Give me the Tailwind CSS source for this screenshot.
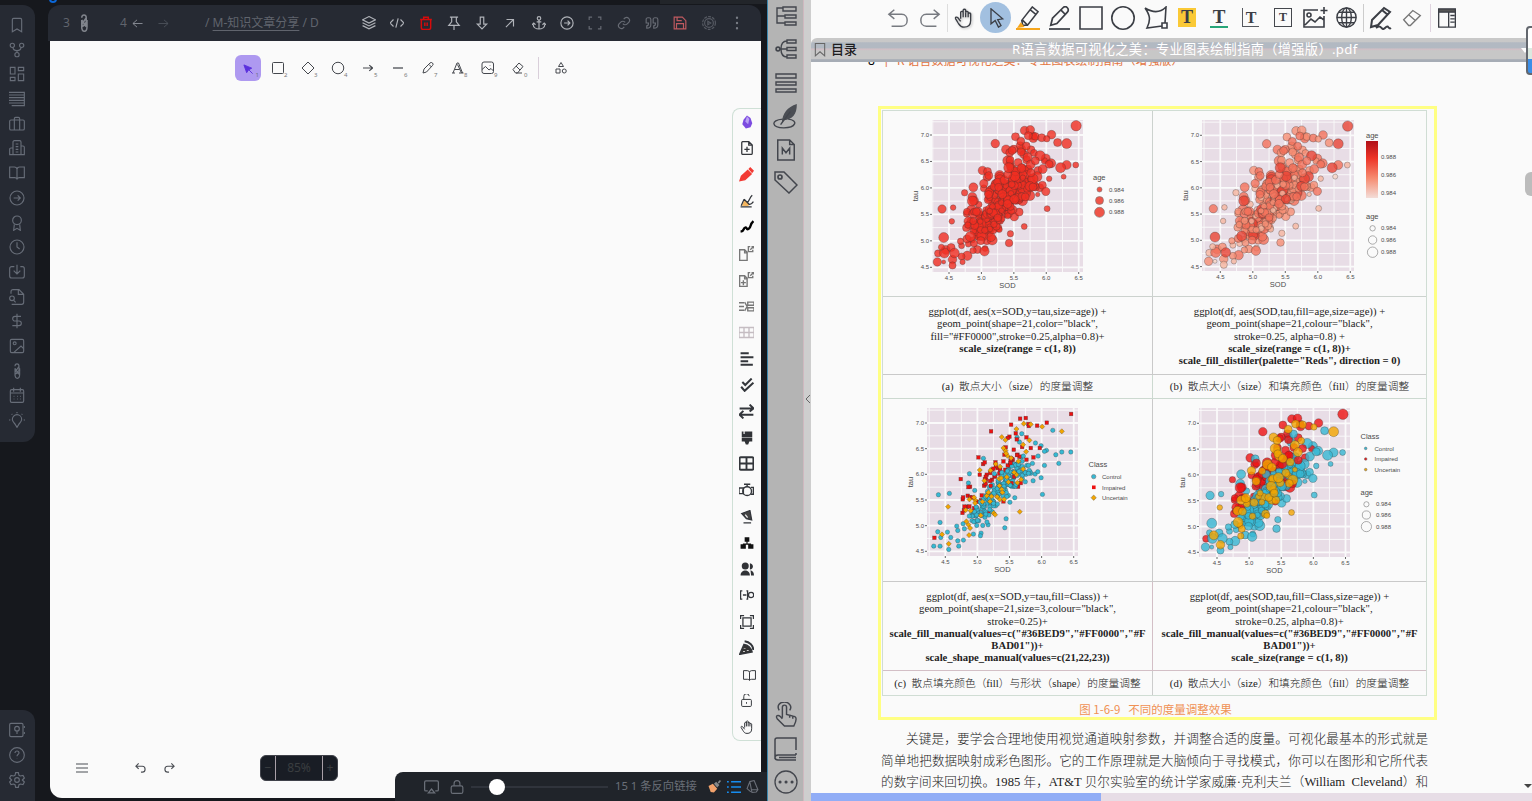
<!DOCTYPE html>
<html lang="zh">
<head>
<meta charset="utf-8">
<title>Notes and PDF reader</title>
<script src="https://cdn.jsdelivr.net/npm/@tailwindcss/browser@4"></script>
</head>
<body class="w-[1532px] h-[801px] overflow-hidden bg-[#16181d] font-['Noto_Sans','Noto_Sans_CJK_SC',sans-serif]">
<svg width="0" height="0" class="absolute" stroke-linecap="round" stroke-linejoin="round">
<defs>
<symbol id="bookmark" viewBox="0 0 24 24"><path d="m19 22-7-4-7 4V4a2 2 0 0 1 2-2h10a2 2 0 0 1 2 2z"/></symbol>
<symbol id="fork" viewBox="0 0 24 24"><circle cx="12" cy="19" r="3.2"/><circle cx="5" cy="5" r="3.2"/><circle cx="19" cy="5" r="3.2"/><path d="M6 8c0 4 2 5 6 5s6-1 6-5M12 13v3"/></symbol>
<symbol id="dash" viewBox="0 0 24 24"><path d="M2 2h7v10H2zM14 2h8v5h-8zM14 12h8v10h-8zM2 17h7v5H2z"/></symbol>
<symbol id="rows" viewBox="0 0 24 24"><path d="M0 2h23v20H4M0 6h23M0 10h23M0 14h23M0 18h23"/></symbol>
<symbol id="case" viewBox="0 0 24 24"><rect x="1" y="6" width="22" height="15" rx="2"/><path d="M8 21V4a2 2 0 0 1 2-2h4a2 2 0 0 1 2 2v17"/></symbol>
<symbol id="news" viewBox="0 0 24 24"><path d="M6 22V3a2 2 0 0 1 2-2h8a2 2 0 0 1 2 2v19zM6 12H3a2 2 0 0 0-2 2v8h22V11a2 2 0 0 0-2-2h-3M10 6h4M10 10h4M10 14h4M10 18h4"/></symbol>
<symbol id="book" viewBox="0 0 24 24"><path d="M12 6v15M1 3h7a4 4 0 0 1 4 3 4 4 0 0 1 4-3h7v16h-7a4 4 0 0 0-4 2 4 4 0 0 0-4-2H1z"/></symbol>
<symbol id="circler" viewBox="0 0 24 24"><circle cx="12" cy="12" r="10.5"/><path d="M7 12h10M13 8l4 4-4 4"/></symbol>
<symbol id="award" viewBox="0 0 24 24"><circle cx="12" cy="8" r="6.5"/><path d="M8 14 7 23l5-3 5 3-1-9"/></symbol>
<symbol id="clock" viewBox="0 0 24 24"><circle cx="12" cy="12" r="10.5"/><path d="M12 5v7l4 3"/></symbol>
<symbol id="inbox" viewBox="0 0 24 24"><path d="M12 1v13M7 10l5 5 5-5M8 4H4a3 3 0 0 0-3 3v11a3 3 0 0 0 3 3h16a3 3 0 0 0 3-3V7a3 3 0 0 0-3-3h-3"/></symbol>
<symbol id="filesearch" viewBox="0 0 24 24"><path d="M3 7V4a3 3 0 0 1 3-3h9l7 7v12a3 3 0 0 1-3 3H4M14 1v7h8"/><circle cx="4.500" cy="14" r="3.500"/><path d="m7 17 3 3"/></symbol>
<symbol id="dollar" viewBox="0 0 24 24"><path d="M12 1v22M18 5H9a3.500 3.500 0 0 0 0 7h6a3.500 3.500 0 0 1 0 7H5"/></symbol>
<symbol id="image" viewBox="0 0 24 24"><rect x="2" y="2" width="20" height="20" rx="2"/><circle cx="8.500" cy="8" r="2.200"/><path d="M7 22 18 12l4 4"/></symbol>
<symbol id="clip" viewBox="0 0 24 24"><path d="M9 5c0-5 6-5 6 0L9 14M15 5v6l-6 6V8M9 17c0 8 7 8 7 0v-4l-7 4M16 13V8M9 8l6 9"/></symbol>
<symbol id="cal" viewBox="0 0 24 24"><rect x="2" y="4" width="20" height="19" rx="2"/><path d="M7 1v6M17 1v6M2 9h20M7 14h1M12 14h1M17 14h1M7 18h1M12 18h1M17 18h1"/></symbol>
<symbol id="bulb" viewBox="0 0 24 24"><path d="M9.500 19c0-2-4.500-3-4.500-8a7 7 0 0 1 14 0c0 5-4.500 6-4.500 8L12 23zM12 0v2M2 12H0M24 12h-2M5 4 4 3M19 4l1-1"/></symbol>
<symbol id="vault" viewBox="0 0 24 24"><rect x="1" y="2" width="20" height="20" rx="2"/><circle cx="12" cy="10" r="3.500"/><path d="M12 13v5M23 6v3M23 15v3"/></symbol>
<symbol id="help" viewBox="0 0 24 24"><circle cx="12" cy="12" r="11"/><path d="M9 9a3 3 0 0 1 6 0c0 2-3 2-3 5M12 17.500v.5"/></symbol>
<symbol id="gear" viewBox="0 0 24 24"><circle cx="12" cy="12" r="3.500"/><path d="m10 1h4l1 4 2 1 4-1 2 4-3 3 3 3-2 4-4-1-2 1-1 4h-4l-1-4-2-1-4 1-2-4 3-3-3-3 2-4 4 1 2-1z"/></symbol>
<symbol id="left" viewBox="0 0 24 24"><path d="M23 12H2M11 4l-9 8 9 8"/></symbol>
<symbol id="right" viewBox="0 0 24 24"><path d="M1 12h21M13 4l9 8-9 8"/></symbol>
<symbol id="layers" viewBox="0 0 24 24"><path d="m12 1 11 5.500-11 5.500L1 6.500zM1 11.500 12 17l11-5.500M1 16.500 12 22l11-5.500"/></symbol>
<symbol id="code" viewBox="0 0 24 24"><path d="m6 6-6 6 6 6M18 6l6 6-6 6M14 4l-4 16"/></symbol>
<symbol id="trash" viewBox="0 0 24 24"><path d="M2 6h20M4 6v14a3 3 0 0 0 3 3h10a3 3 0 0 0 3-3V6M8 5V2h8v3M10 11v6M14 11v6"/></symbol>
<symbol id="pin" viewBox="0 0 24 24"><path d="M5 2h14M8 2v8l-5 6h18l-5-6V2M12 16v8"/></symbol>
<symbol id="down" viewBox="0 0 24 24"><path d="M9 2h6v12h5l-8 8-8-8h5z"/></symbol>
<symbol id="upright" viewBox="0 0 24 24"><path d="M5 19 18 6M6 6h12v12"/></symbol>
<symbol id="anchor" viewBox="0 0 24 24"><circle cx="12" cy="4" r="3"/><path d="M12 7v16M2 14c0 11 20 11 20 0M0 15l3-3 3 3M18 15l3-3 3 3M8 10h8"/></symbol>
<symbol id="expand" viewBox="0 0 24 24"><path d="M7 2H2v5M17 2h5v5M7 22H2v-5M17 22h5v-5"/></symbol>
<symbol id="link" viewBox="0 0 24 24"><path d="m10 13a5 5 0 0 0 7.500.5l3-3a5 5 0 0 0-7-7l-2 2M14 11a5 5 0 0 0-7.500-.5l-3 3a5 5 0 0 0 7 7l2-2"/></symbol>
<symbol id="quote" viewBox="0 0 24 24"><path d="M2 5a3 3 0 0 1 3-2h2a3 3 0 0 1 3 3v9c0 5-3 6-7 6v-4c3 0 3-2 3-5H2zM14 5a3 3 0 0 1 3-2h2a3 3 0 0 1 3 3v9c0 5-3 6-7 6v-4c3 0 3-2 3-5h-4z"/></symbol>
<symbol id="save" viewBox="0 0 24 24"><path d="M2 2h14l6 6v14H2zM6 22v-9h12v9M7 2v6h8"/></symbol>
<symbol id="badge" viewBox="0 0 24 24"><circle cx="12" cy="12" r="11" stroke-dasharray="5 2"/><circle cx="12" cy="12" r="7.500"/><path d="m10 9 5 3-5 3z" /></symbol>
<symbol id="pencil" viewBox="0 0 24 24"><path d="M2 22l2-8L16 2a3 3 0 0 1 5 5L9 20zM14 5l5 5"/></symbol>
<symbol id="eraser" viewBox="0 0 24 24"><path d="m2 15 12-13 8 7-11 13H7zM8 8l8 8M8 22h12"/></symbol>
<symbol id="hand" viewBox="0 0 24 24"><path d="M8 13V5a1.600 1.600 0 0 1 3 0V2.500a1.600 1.600 0 0 1 3 0V5a1.600 1.600 0 0 1 3 0v2a1.600 1.600 0 0 1 3 0v8c0 6-3 8-8 8-4 0-5-2-7-5l-3-5c-1-2 1-3 3-1l3 4M11 4v7M14 4v7M17 6v5"/></symbol>
<symbol id="filep" viewBox="0 0 24 24"><path d="M3 3a2 2 0 0 1 2-2h10l6 6v14a2 2 0 0 1-2 2H5a2 2 0 0 1-2-2zM15 1v6h6M12 10v9M7.500 14.500h9"/></symbol>
<symbol id="fileopen" viewBox="0 0 24 24"><path d="M1 6h8l4 4v13H1zM9 6v5h4M18 1h-3v8h7V6M18 6l5-5M20 1h3v3"/></symbol>
<symbol id="undo" viewBox="0 0 24 24"><path d="M8 3 2 8l6 5M2 8h14c8 0 8 13 0 13H5"/></symbol>
<symbol id="frame" viewBox="0 0 24 24"><path d="M5 5h14v14H5zM1 7V1h6M17 1h6v6M1 17v6h6M17 23h6v-6"/></symbol>
<symbol id="lock" viewBox="0 0 24 24"><rect x="2" y="10" width="20" height="13" rx="3"/><path d="M7 10V6a5 5 0 0 1 10 0v4"/></symbol>
<symbol id="unlock" viewBox="0 0 24 24"><rect x="3" y="10" width="18" height="13" rx="2"/><path d="M7 10V5a5 5 0 0 1 10-1M12 15v3"/></symbol>
</defs>
</svg>

<div class="flex w-[1532px] h-[801px]">
<!-- vault ribbon -->
<nav class="w-12 h-full flex flex-col justify-between pt-[5px] text-[#676d78] fill-none stroke-current stroke-[1.7]">
  <div class="w-[35px] h-[437px] rounded-r-xl bg-[#262a33] flex flex-col justify-between items-center pt-3 pb-[14px] pr-[2px]">
    <svg class="size-4"><use href="#bookmark"/></svg><svg class="size-4"><use href="#fork"/></svg><svg class="size-4"><use href="#dash"/></svg><svg class="size-4"><use href="#rows"/></svg><svg class="size-4"><use href="#case"/></svg><svg class="size-4"><use href="#news"/></svg><svg class="size-4"><use href="#book"/></svg><svg class="size-4"><use href="#circler"/></svg><svg class="size-4"><use href="#award"/></svg><svg class="size-4"><use href="#clock"/></svg><svg class="size-4"><use href="#inbox"/></svg><svg class="size-4"><use href="#filesearch"/></svg><svg class="size-4"><use href="#dollar"/></svg><svg class="size-4"><use href="#image"/></svg><svg class="size-4"><use href="#clip"/></svg><svg class="size-4"><use href="#cal"/></svg><svg class="size-4"><use href="#bulb"/></svg>
  </div>
  <div class="w-[35px] h-[91px] rounded-tr-xl bg-[#262a33] flex flex-col items-center gap-[9px] pt-3 pr-[2px]">
    <svg class="size-4"><use href="#vault"/></svg><svg class="size-4"><use href="#help"/></svg><svg class="size-4"><use href="#gear"/></svg>
  </div>
</nav>

<!-- drawing workspace -->
<main class="relative w-[719px] h-full pt-[5px]">
  <div class="absolute left-[612px] top-0 w-[107px] h-1 bg-[#22252a]"></div>
  <div class="absolute left-0 top-0 h-1 w-[10px] overflow-hidden"><div class="mt-[-5px] ml-px size-2 rounded-full border-2 border-[#0b67d8]"></div></div>
  <header class="w-[713px] h-9 rounded-t-xl bg-[#262a33] flex items-center text-[#60646d] fill-none stroke-current stroke-2 text-[12px]">
    <span class="ml-[15px] w-[13px]">3</span><svg class="ml-[-1px] size-[18px] text-[#80848c]"><use href="#clip"/></svg>
    <span class="ml-[27px] w-[9px]">4</span><svg class="ml-[3px] size-[11px] text-[#8c9099]"><use href="#left"/></svg><svg class="ml-[15px] size-[11px] text-[#4c515a]"><use href="#right"/></svg>
    <div class="ml-[36px] w-[117px] flex whitespace-pre overflow-hidden text-[12px]">/ <span class="underline underline-offset-[3px]">M-知识文章分享</span> / D</div>
    <div class="ml-[40px] flex gap-[14.300px] text-[#b0b3b9]">
      <svg class="size-[14px]"><use href="#layers"/></svg><svg class="size-[14px]"><use href="#code"/></svg><svg class="size-[14px] text-[#d60b0b] stroke-[2.5]"><use href="#trash"/></svg><svg class="size-[14px]"><use href="#pin"/></svg><svg class="size-[14px]"><use href="#down"/></svg><svg class="size-[14px]"><use href="#upright"/></svg><svg class="size-[14px]"><use href="#anchor"/></svg><svg class="size-[14px]"><use href="#circler"/></svg><svg class="size-[14px] text-[#676b74]"><use href="#expand"/></svg><svg class="size-[14px] text-[#676b74]"><use href="#link"/></svg><svg class="size-[14px] text-[#676b74]"><use href="#quote"/></svg><svg class="size-[14px] text-[#c05a60]"><use href="#save"/></svg><svg class="size-[14px] text-[#565a63]"><use href="#badge"/></svg><svg class="size-[14px] text-[#777b84]" viewBox="0 0 24 24"><path d="M12 3v.1M12 12v.1M12 21v.1" stroke-width="4" stroke-linecap="round"/></svg>
    </div>
  </header>
  <section class="relative ml-[2px] w-[711px] h-[756.500px] rounded-bl-xl bg-[#fafafa] flex flex-col">
    <div class="flex items-center mt-[14px] ml-[185px] h-[26px] text-[#44474d] fill-none stroke-current stroke-2 text-[6px]">
      <div class="w-[26px] h-[26px] rounded-md bg-[#ae99f0] relative flex items-center justify-center text-[#5b30dd]"><svg class="size-[11px] mt-[3px] ml-px" viewBox="0 0 24 24"><path d="m2 2 6 17 4-6 7-4z" fill="#5b30dd"/><path d="m12 12 9 9"/></svg><span class="absolute right-[2px] bottom-[1px] text-gray-500">1</span></div>
      <div class="flex ml-[2px]">
        <div class="w-[30px] h-6 relative flex items-center justify-center"><svg class="size-3 overflow-visible" viewBox="0 0 24 24"><rect x="1" y="1" width="22" height="22" rx="2"/></svg><span class="absolute left-[21px] bottom-0 text-[#777]">2</span></div>
        <div class="w-[30px] h-6 relative flex items-center justify-center"><svg class="size-3 overflow-visible" viewBox="0 0 24 24"><path d="m12 0 12 12-12 12L0 12z"/></svg><span class="absolute left-[21px] bottom-0 text-[#777]">3</span></div>
        <div class="w-[30px] h-6 relative flex items-center justify-center"><svg class="size-3 overflow-visible" viewBox="0 0 24 24"><circle cx="12" cy="12" r="11.500"/></svg><span class="absolute left-[21px] bottom-0 text-[#777]">4</span></div>
        <div class="w-[30px] h-6 relative flex items-center justify-center"><svg class="size-[10px]" viewBox="0 0 24 24"><path d="M0 12h23M15 5l8 7-8 7" stroke-width="2.800"/></svg><span class="absolute left-[21px] bottom-0 text-[#777]">5</span></div>
        <div class="w-[30px] h-6 relative flex items-center justify-center"><svg class="size-[10px]" viewBox="0 0 24 24"><path d="M0 12h24" stroke-width="3"/></svg><span class="absolute left-[21px] bottom-0 text-[#777]">6</span></div>
        <div class="w-[30px] h-6 relative flex items-center justify-center"><svg class="size-3"><use href="#pencil"/></svg><span class="absolute left-[21px] bottom-0 text-[#777]">7</span></div>
        <div class="w-[30px] h-6 relative flex items-center justify-center"><svg class="size-3 overflow-visible" viewBox="0 0 24 24"><path d="M2 22 10 2h3l8 20M6 15h9M0 22h6M14 22h9M11 5l8 17"/></svg><span class="absolute left-[21px] bottom-0 text-[#777]">8</span></div>
        <div class="w-[30px] h-6 relative flex items-center justify-center"><svg class="size-3 overflow-visible" viewBox="0 0 24 24"><rect x="0" y="0" width="23" height="23" rx="4"/><path d="m0 15 7-6 7 7 4-3 5 5M16 6v1"/></svg><span class="absolute left-[21px] bottom-0 text-[#777]">9</span></div>
        <div class="w-[30px] h-6 relative flex items-center justify-center"><svg class="size-3"><use href="#eraser"/></svg><span class="absolute left-[21px] bottom-0 text-[#777]">0</span></div>
      </div>
      <div class="w-px h-[22px] bg-[#d9cfda] ml-[5px]"></div>
      <svg class="size-3 ml-[16px]" viewBox="0 0 24 24"><path d="m12 1 5 8H7zM2 14h8v8H2z"/><circle cx="18.500" cy="18" r="4"/></svg>
    </div>
    <aside class="absolute right-0 top-[67px] w-[29px] h-[633px] border border-r-0 border-[#cfe0d6] rounded-l-lg text-[#33363b] fill-none stroke-current stroke-[2.2] grid auto-rows-fr items-center justify-items-center pr-px">
      <svg class="size-[14px]" viewBox="0 0 24 24" stroke="none"><path fill="#7c4be0" d="M12 1 6 8l-2 8 6 7 8-2 3-7-3-9z"/><path fill="#b9a1f3" d="m12 2-3 9 5 5 2-9z"/></svg>
      <svg class="size-[14px]"><use href="#filep"/></svg>
      <svg class="size-[15px]" viewBox="0 0 24 24" stroke="none" fill="#f23b34"><path d="M0 23 3 14 14 4l7 7L10 21zM15 3l3-3 6 6-3 4z"/></svg>
      <svg class="size-[14px]" viewBox="0 0 24 24"><path fill="#f3b55e" stroke="none" d="M3 20 8 10l8 8-2 3z"/><path d="M1 22h19M7 9l9 9M2 20 7 9M12 15c4-2 4-9 9-13M16 18c3 0 5-2 7-5"/></svg>
      <svg class="size-[14px]" viewBox="0 0 24 24"><path d="M1 20c7-1 4-6 8-7s1 5 6 2 1-7 8-13" stroke="#000" stroke-width="4"/></svg>
      <svg class="size-[15px] text-[#777]"><use href="#fileopen"/></svg>
      <svg class="size-[15px] text-[#777]" viewBox="0 0 24 24"><use href="#fileopen"/><path d="M7 13v8M3 17h8"/></svg>
      <svg class="size-[15px] text-[#777]" viewBox="0 0 24 24"><path d="M0 6h8M0 12h8M0 18h8M9 5l4 7-4 7M14 5h10v5H14zM14 14h10v5H14z"/></svg>
      <svg class="size-[15px] text-[#c5bdc2]" viewBox="0 0 24 24"><path d="M0 4h24v16H0zM0 12h24M8 4v16M16 4v16"/></svg>
      <svg class="size-[14px]" viewBox="0 0 24 24"><path d="M1 2h14M1 9h22M1 16h13M1 22h21" stroke-width="3.500"/></svg>
      <svg class="size-[14px]" viewBox="0 0 24 24"><path d="m4 7 5 5L20 1M2 15l6 7 15-14" stroke-width="3.500"/></svg>
      <svg class="size-[15px]" viewBox="0 0 24 24"><path d="M1 7h22M17 1l6 6-6 5M23 17H1M7 11l-6 6 6 6" stroke-width="3.200"/></svg>
      <svg class="size-[14px]" viewBox="0 0 24 24" stroke="none" fill="#303236"><path d="M3 1h3v4h2V1h13v10H3zM3 12h18v6h-5l-2 5h-4l-2-5H3z"/></svg>
      <svg class="size-[15px]" viewBox="0 0 24 24"><rect x="1" y="2" width="22" height="20" rx="2" stroke-width="3"/><path d="M1 12h22M12 2v20" stroke-width="3"/></svg>
      <svg class="size-[15px]" viewBox="0 0 24 24"><circle cx="13" cy="13" r="7"/><path d="M0 8h7v9H0zM19 7h4v11h-4M8 2h10M13 2v4"/></svg>
      <svg class="size-[14px]" viewBox="0 0 24 24"><path d="M3 6 17 1l3 16-9-2zM6 22h13" fill="#444"/><path d="m9 8 4 5" stroke="#eee"/></svg>
      <svg class="size-[14px]" viewBox="0 0 24 24" stroke="none" fill="#111"><path d="M8 2h8v8H8zM1 14h9v8H1zM14 14h9v8h-9zM11 10h2v3h6v2H5v-2h6z"/></svg>
      <svg class="size-[14px]" viewBox="0 0 24 24" stroke="none" fill="#303236"><circle cx="9" cy="7" r="6"/><path d="M1 23c0-11 16-11 16 0zM17 2c7 1 7 10 0 11zM18 14c4 1 6 4 6 9h-5z"/></svg>
      <svg class="size-[14px]" viewBox="0 0 24 24"><path d="M4 5H1v14h3M5 12h6M11 5h2v14h-2"/><circle cx="19" cy="12" r="4.500"/></svg>
      <svg class="size-[14px]"><use href="#frame"/></svg>
      <svg class="size-[15px]" viewBox="0 0 24 24"><path d="M1 23 8 7c7 1 11 5 13 12z" fill="#333"/><path d="M9 2c8 1 14 7 14 14" stroke-width="3"/><path d="M9 13v1M14 16v1M8 18v1" stroke="#fff" stroke-width="3"/></svg>
      <svg class="size-[13px] ml-[6px] mt-[2px] stroke-[1.8]"><use href="#book"/></svg>
      <svg class="size-[13px] stroke-[1.8]"><use href="#unlock"/></svg>
      <svg class="size-[14px] stroke-[1.7]"><use href="#hand"/></svg>
    </aside>
    <div class="mt-auto mb-[16.500px] ml-[26px] flex items-center h-[26px] text-[#4b4e54] fill-none stroke-current stroke-2">
      <svg class="size-3 overflow-visible" viewBox="0 0 24 24"><path d="M0 4h24M0 12h24M0 20h24"/></svg>
      <svg class="size-[11px] ml-[47px] overflow-visible" viewBox="0 0 24 24"><path d="M8 1 2 7l6 6M2 7h14c8 0 8 13 0 13h-3" stroke-width="2.500"/></svg>
      <svg class="size-[11px] ml-[18px] -scale-x-100 overflow-visible" viewBox="0 0 24 24"><path d="M8 1 2 7l6 6M2 7h14c8 0 8 13 0 13h-3" stroke-width="2.500"/></svg>
      <div class="ml-[85px] w-[78px] h-[26px] rounded-md bg-[#191d25] border border-[#40424a] text-[#3a3d40] text-[12px] flex overflow-hidden"><span class="w-[15px] text-center leading-6 border-r border-[#a9a0a8]">−</span><span class="flex-1 text-center leading-6">85%</span><span class="w-[15px] text-center leading-6 border-l border-[#a9a0a8]">+</span></div>
    </div>
  </section>
  <footer class="absolute right-0 bottom-0 w-[372px] h-[29px] rounded-tl-lg bg-[#20242a] flex items-center pl-[29px] text-[#6a6f78] fill-none stroke-current stroke-2 text-[12px]">
    <svg class="size-[15px]" viewBox="0 0 24 24"><path d="M6 19H3a2 2 0 0 1-2-2V5a2 2 0 0 1 2-2h18a2 2 0 0 1 2 2v12a2 2 0 0 1-2 2h-3M12 16l5 6H7z"/></svg>
    <svg class="size-[14px] ml-[11px]"><use href="#lock"/></svg>
    <div class="ml-[7px] w-[137px] h-[2px] bg-[#30343c] flex items-center"><div class="ml-[18px] size-4 rounded-full bg-white"></div></div>
    <span class="ml-[7px] w-[83px] whitespace-nowrap text-[11.300px]">15 1 条反向链接</span>
    <svg class="size-[13px] ml-[10px]" viewBox="0 0 24 24" stroke="none"><path d="m1 11 8-4 8 9-6 7-6-1z" fill="#f2a26c"/><path d="m11 7 4-4 6 6-4 5zM18 4l4-4 2 2-4 5z" fill="#87898a"/></svg>
    <svg class="size-[14px] ml-[6px] text-[#168df0]" viewBox="0 0 24 24"><path d="M7 3h17M7 12h17M7 21h17M0 3h3M0 12h3M0 21h3" stroke-width="2.500"/></svg>
    <svg class="size-[13px] ml-[5px]" viewBox="0 0 24 24"><path d="M7 3 15 1l7 17-3 4-8 1zM7 3 2 16l7 6M7 3l3 15h12"/></svg>
  </footer>
</main>

<!-- reader side tabs -->
<aside class="w-9 h-full border-l border-[#3c87ae] bg-[#b4b4b4] flex flex-col justify-between items-center pt-1 pb-[7px] text-[#43464d] fill-none stroke-current stroke-[1.700]">
  <div class="flex flex-col gap-[9.300px] items-center">
    <svg class="size-6" viewBox="0 0 24 24"><path d="M9 3h13v4H9zM11 11h11v3H11zM11 18h11v3H11zM9 4H3v15h8M3 12h8" stroke-width="1.400"/></svg>
    <svg class="size-6" viewBox="0 0 24 24"><path d="M13 3h9v3h-9zM13 10.500h9v3h-9zM13 18h9v3h-9zM13 4C8 4 7 8 7 12s1 8 6 8M6 12h7" stroke-width="1.400"/><circle cx="4" cy="12" r="1.900"/></svg>
    <svg class="size-6" viewBox="0 0 24 24"><path d="M2 3h20v4H2zM2 11h20v3H2zM2 18h20v3H2z" stroke-width="1.400"/></svg>
    <svg class="size-[26px]" viewBox="0 0 24 24"><path d="M8 18C9 8 13 3 22 0c0 10-4 14-12 15z" fill="#4b4e54" stroke="none"/><path d="M9 14c-12 1-10 8 1 8s14-7 4-8M7 19l9-12" stroke-width="1.300"/></svg>
    <svg class="size-[22px]" viewBox="0 0 24 24"><path d="M3 1h13l5 5v17H3zM16 1v5h5M8 17v-7l4 5 4-5v7" stroke-width="1.600"/></svg>
    <svg class="size-6" viewBox="0 0 24 24"><path d="M1 2h9l13 13-8 8L1 10z" stroke-width="1.500"/><circle cx="6" cy="7" r="2"/></svg>
  </div>
  <div class="flex flex-col gap-[9.500px] items-center">
    <svg class="size-[25px]" viewBox="0 0 24 24"><path d="M9 15V5a2 2 0 0 1 4 0v7l8 2c2 1 1 5-1 9h-9L4 16c-2-3 1-4 3-2l2 2M6 8C3 3 7 0 11 0s8 4 5 8M16 12v3M19 13v3" stroke-width="1.400"/></svg>
    <svg class="size-6" viewBox="0 0 24 24"><path d="M22 13V1H3a2 2 0 0 0-2 2v19M22 18H4c-4 0-4 5 0 5h18M22 16v2M5 20.500h17" stroke-width="1.500"/></svg>
    <svg class="size-6" viewBox="0 0 24 24"><circle cx="12" cy="12" r="11" stroke-width="1.300"/><path d="M6 12h.1M12 12h.1M18 12h.1" stroke-width="3" stroke-linecap="round"/></svg>
  </div>
</aside>
<div class="w-2 h-full bg-[#cecece] border-l border-[#cfb8bf] flex items-center justify-center pb-[4px] text-[#666]"><svg class="size-3 shrink-0" viewBox="0 0 12 12"><path d="M8 2 4 6l4 4" fill="none" stroke="currentColor"/></svg></div>

<!-- PDF reader -->
<section class="relative w-[721px] h-full bg-[#fafafa] flex flex-col overflow-hidden">
  <div class="h-[38px] shrink-0 flex items-center pb-[3px] pl-[76px] text-[#3b3e45] fill-none stroke-current stroke-[1.600] font-['Liberation_Serif'] font-bold">
    <svg class="size-[22px] text-[#777a80]"><use href="#undo"/></svg>
    <svg class="size-[22px] ml-[10px] -scale-x-100 text-[#777a80]"><use href="#undo"/></svg>
    <div class="w-px h-7 ml-[6px] bg-[#ddd]"></div>
    <svg class="size-5 ml-[6px] drop-shadow-[1px_1px_1px_#bbb]"><use href="#hand"/></svg>
    <div class="size-[31px] rounded-full bg-[#a2c0e0] ml-[6px] flex items-center justify-center"><svg class="size-5" viewBox="0 0 24 24"><path d="M6 1v18l5-4 4 8 3-2-4-7 6-1z"/></svg></div>
    <div class="ml-[5px] w-6 h-[24px] border-b-2 border-[#f5a51c]"><svg class="size-[23px]" viewBox="0 0 24 24"><path d="m6 15 11-14 6 5-11 14H7zM6 14l6 6M15 4l6 5"/><path d="m1 23 4-6 4 5z" fill="#f5a51c" stroke="none"/></svg></div>
    <div class="ml-[9px] w-[21px] h-[24px] border-b-2 border-[#55585e]"><svg class="size-[21px] stroke-2"><use href="#pencil"/></svg></div>
    <svg class="size-6 ml-[9px]" viewBox="0 0 24 24"><path d="M1 1h22v22H1z"/></svg>
    <svg class="size-6 ml-[8px]" viewBox="0 0 24 24"><circle cx="12" cy="12" r="11.200"/></svg>
    <svg class="size-6 ml-[9px]" viewBox="0 0 24 24"><path d="M1 2c8 5 15 5 21-1l-1 16M18 20 3 22c4-8 3-13-2-20M18 17h5v5h-5z"/></svg>
    <span class="ml-[10px] w-[18px] h-[19px] bg-[#fac936] text-[18px] leading-[19px] text-center">T</span>
    <span class="ml-[14px] w-[18px] h-[20px] border-b-2 border-[#26a578] text-[19px] leading-[18px] text-center">T</span>
    <span class="ml-[14px] w-[17px] h-[19px] border-l border-b border-[#55585e] text-[16px] leading-[19px] text-center">T</span>
    <span class="ml-[15px] w-[18px] h-[19px] border border-[#44474d] text-[12px] leading-[16px] text-center">T</span>
    <svg class="size-6 ml-[11px] overflow-visible" viewBox="0 0 24 24"><path d="M15 4H1v17h20V10M2 19l6-6 4 3 5-5 4 3M21 1v7M17.500 4.500H24.500"/><circle cx="6" cy="9" r="2"/></svg>
    <svg class="size-[21px] ml-[9px]" viewBox="0 0 24 24"><circle cx="12" cy="12" r="11"/><ellipse cx="12" cy="12" rx="5.500" ry="11"/><path d="M12 1v22M1 12h22M3 6h18M3 18h18"/></svg>
    <div class="w-px h-7 ml-[6px] bg-[#ccc]"></div>
    <svg class="size-6 ml-[5px]" viewBox="0 0 24 24"><path d="m3 14 12-12 6 4-12 13-7 2zM13 4l6 5M7 22c6-5 5 4 9 0s3 2 6 0" stroke-width="2"/></svg>
    <svg class="size-5 ml-[9px] text-[#777]" viewBox="0 0 24 24"><path d="m2 14 11-11 9 6-12 12H8zM8 8l8 7"/></svg>
    <div class="w-px h-7 ml-[8px] bg-[#dfd3df]"></div>
    <svg class="size-5 ml-[6px]" viewBox="0 0 24 24"><path d="M2 2h20v21H2zM14 3v20M16 9h5M16 13h5M16 17h5"/><path d="M2 1h20v4H2z" fill="#555"/></svg>
  </div>
  <div class="h-6 shrink-0 flex items-center bg-[linear-gradient(#c8c8c8_0_15%,#b2b9c2_20%_42%,#cfbfc5_45%_49%,#c7c7c7_53%_88%,#a6acb5_90%)] pl-[2px] rounded-tl-md">
    <svg class="size-[14px] text-[#666]" viewBox="0 0 24 24"><path d="M4 1h16v21l-8-7-8 7z" fill="none" stroke="currentColor" stroke-width="1.800"/></svg>
    <span class="ml-1 w-[181px] text-[13px] font-medium text-[#1d1d1f]">目录</span>
    <span class="text-[13.200px] text-white whitespace-nowrap w-[348px] tracking-[0.350px]">R语言数据可视化之美：专业图表绘制指南（增强版）.pdf</span>
    <div class="ml-auto mr-[3px] border-x-4 border-t-[5px] border-x-transparent border-t-white"></div>
  </div>
  <div class="h-[5px] shrink-0 overflow-hidden pl-[57px] text-[12px] leading-[12px] text-[#e37543] whitespace-pre"><div class="-mt-[7px] flex"><span class="w-[15px] text-black">8</span><span class="w-[14px]">|</span><span>R 语言数据可视化之美：专业图表绘制指南（增强版）</span></div></div>
  <!-- figure -->
  <figure class="mt-[39px] ml-[67px] w-[559px] h-[614px] shrink-0 border-[3px] border-[#ffff83] pl-px pt-px">
    <div class="w-[545px] grid grid-cols-[270px_273px] grid-rows-[186px_78px_24px_183px_89px_24px] border border-[#d0ddd4] text-[10.700px] leading-[12.300px] text-[#222] text-center font-['Liberation_Serif','Noto_Sans_CJK_SC']">
      <div class="border-r border-b border-[#ccd2ce]"><svg id="pa" width="269" height="185" viewBox="883 111 269 185"></svg></div>
      <div class="border-b border-[#ccd2ce]"><svg id="pb" width="273" height="185" viewBox="1153 111 273 185"></svg></div>
      <div class="border-r border-b border-[#c9c9c9] pt-2"><p>ggplot(df, aes(x=SOD,y=tau,size=age)) +</p><p>geom_point(shape=21,color="black",</p><p>fill="#FF0000",stroke=0.25,alpha=0.8)+</p><p class="font-bold">scale_size(range = c(1, 8))</p></div>
      <div class="border-b border-[#c9c9c9] pt-2"><p>ggplot(df, aes(SOD,tau,fill=age,size=age)) +</p><p>geom_point(shape=21,colour="black",</p><p>stroke=0.25, alpha=0.8) +</p><p class="font-bold">scale_size(range = c(1, 8))+</p><p class="font-bold">scale_fill_distiller(palette="Reds", direction = 0)</p></div>
      <div class="border-r border-b border-[#ccd9d0] leading-[23px] font-light">(a)&nbsp; 散点大小（size）的度量调整</div>
      <div class="border-b border-[#ccd9d0] leading-[23px] font-light">(b)&nbsp; 散点大小（size）和填充颜色（fill）的度量调整</div>
      <div class="border-r border-b border-[#c9c9c9]"><svg id="pc" width="269" height="182" viewBox="883 399 269 182"></svg></div>
      <div class="border-b border-[#c9c9c9]"><svg id="pd" width="273" height="182" viewBox="1153 399 273 182"></svg></div>
      <div class="border-r border-b border-[#d3bfc6] pt-2 whitespace-nowrap"><p>ggplot(df, aes(x=SOD,y=tau,fill=Class)) +</p><p>geom_point(shape=21,size=3,colour="black",</p><p>stroke=0.25)+</p><p class="font-bold">scale_fill_manual(values=c("#36BED9","#FF0000","#F</p><p class="font-bold">BAD01"))+</p><p class="font-bold">scale_shape_manual(values=c(21,22,23))</p></div>
      <div class="border-b border-[#d3bfc6] pt-2 whitespace-nowrap"><p>ggplot(df, aes(SOD,tau,fill=Class,size=age)) +</p><p>geom_point(shape=21,colour="black",</p><p>stroke=0.25, alpha=0.8)+</p><p class="font-bold">scale_fill_manual(values=c("#36BED9","#FF0000","#F</p><p class="font-bold">BAD01"))+</p><p class="font-bold">scale_size(range = c(1, 8))</p></div>
      <div class="border-r border-[#ccc] leading-6 font-light">(c)&nbsp; 散点填充颜色（fill）与形状（shape）的度量调整</div>
      <div class="leading-6 font-light">(d)&nbsp; 散点大小（size）和填充颜色（fill）的度量调整</div>
    </div>
    <figcaption class="pt-1 pr-[5px] text-center text-[11.500px] leading-[18px] text-[#f09154] whitespace-pre font-['Noto_Sans_CJK_SC']">图 1-6-9   不同的度量调整效果</figcaption>
  </figure>
  <div class="mt-[9px] ml-[70px] w-[547px] text-[12.600px] leading-[21.500px] text-[#222] font-light font-['Liberation_Serif','Noto_Sans_CJK_SC']">
    <p class="pl-[25px] [text-align-last:justify] whitespace-nowrap">关键是，要学会合理地使用视觉通道映射参数，并调整合适的度量。可视化最基本的形式就是</p>
    <p class="[text-align-last:justify] whitespace-nowrap">简单地把数据映射成彩色图形。它的工作原理就是大脑倾向于寻找模式，你可以在图形和它所代表</p>
    <p class="[text-align-last:justify] whitespace-nowrap">的数字间来回切换。1985 年，AT&amp;T 贝尔实验室的统计学家威廉·克利夫兰（William&nbsp; Cleveland）和</p>
  </div>
  <div class="absolute left-0 bottom-0 w-full h-2 bg-[#e7dde6]"><div class="w-[290px] h-full bg-[#91adf6]"></div></div>
  <div class="absolute right-0 top-[172px] w-[7px] h-6 rounded-l-md bg-[#bcbcbc]"></div>
  <div class="absolute right-[-8px] top-[26px] w-[14px] h-[49px] rounded border-2 border-[#63676e] bg-[linear-gradient(#fff_0_45%,#dce9e0_45%_70%,#3b8ee8_70%)]"></div>
  <div class="absolute right-0 bottom-[13px] border-x-4 border-t-4 border-x-transparent border-t-[#444]"></div>
</section>
</div>

<script>
// Samples: x, y on a 3x grid of panel (c), plus the radius used when size maps age.
const I = "588,58,5.2 435,72,4.3 452,70,4.3 408,90,4 515,84,4.3 486,93,4 460,88,4 461,94,4.5 348,110,4.3 422,116,4 403,126,4 398,130,4 454,128,4 425,134,4 416,165,4 441,157,4 467,160,4 494,160,3.2 388,180,5 427,180,4 433,186,4 310,188,4.3 385,200,4 392,158,4 454,195,4 475,188,4 407,190,4 406,205,5 398,212,4 405,212,5 425,208,4 329,203,4 324,208,4 362,215,5 368,220,4 355,222,4 314,240,3.5 345,235,4 335,240,3 358,246,4 332,246,4 333,255,4 350,225,4 375,225,4 417,246,4 257,253,3.2 327,273,4 409,265,4 429,276,5 437,265,4 280,277,5 285,276,4.5 264,308,3.5 278,303,5 292,308,4 276,336,4 320,302,3 340,354,4 178,429,3.5 385,320,3";
const C = "533,107,4 440,117,4 426,128,4.5 433,142,4 481,145,5 498,153,4.5 514,167,4.5 508,170,4 542,180,5 560,172,4.5 587,172,3 489,184,4.5 551,206,2.5 508,212,2.8 472,206,5 455,212,4 441,200,4 460,212,5 445,184,4 430,215,4 441,215,4 425,220,4 452,239,4 460,236,4 467,236,4 480,238,4 488,231,4 498,249,4.2 474,258,2.2 502,299,3 283,237,4.5 325,191,4 280,265,4.5 223,296,2.8 190,300,4.2 299,287,3.3 358,237,4 380,233,3 405,232,4 330,270,4 409,275,4 419,309,4 393,372,3.2 389,399,3.8 195,383,5 188,411,3 217,412,4 197,428,5 227,428,4.8 176,454,4.2 195,454,2 221,464,3.6 251,454,2.7 248,438,3.5 265,436,4.7 248,407,3 245,394,3.2 264,387,4 268,402,3 318,415,3 316,423,4.7 295,418,4 323,392,4 339,390,5 305,392,4 311,378,5 301,380,4";
const U = "424,103,4 446,87,4 467,89,3.8 501,96,3.2 560,110,5 380,127,4.5 391,136,4 463,137,3.5 444,150,4.5 385,160,5 453,171,4.5 391,168,4 397,183,4.5 408,190,4.3 393,176,4 430,200,4 444,223,2.5 314,226,4.2 362,208,5 375,216,4.3 346,227,3.5 395,247,5 400,262,4 417,233,4 424,240,3 438,254,5 427,264,4 328,258,4 372,252,3 378,250,4 380,284,4 382,293,4 373,273,5 340,293,3 349,305,4 335,303,3 366,306,4 374,314,4 387,314,4 345,320,3 322,321,4 283,314,4.5 297,308,4.5 300,325,3.5 300,316,4 272,346,4.5 287,348,4 317,362,3.2 356,355,4 360,360,3 274,380,5 280,390,3 285,400,3.5 282,421,3.2 201,419,4.5 221,447,4.3 219,336,2.8 434,351,3";
let seed = 11;
const rnd = () => (seed = (seed * 16807) % 2147483647) / 2147483647;
const gauss = () => (rnd() + rnd() + rnd() + rnd() - 2) * 0.9;
const pts = [];
for (const [s, k] of [[C, 0], [I, 1], [U, 2]])
  for (const p of s.split(" ")) { const [x, y, r] = p.split(",").map(Number); pts.push({x: x + .3, y, r, k}); }
for (let i = 0; i < 175; i++) {
  const t = rnd(), w = gauss();
  const x = 292 + t * 150 + w * 30, y = 374 - t * 172 + w * 28 + gauss() * 12;
  pts.push({x, y, r: 2.7 + rnd() * 2.4, k: w < -.5 ? 1 : 0});
}
for (const p of pts) { p.u = 4.5 + (p.x - 211) / 192.5; p.v = 7 - (p.y - 85) / 153.8; p.o = rnd(); }
const cols = ["#36b8d3", "#ed1111", "#f2a500"];
const reds = ["#f8d5c5", "#f6b6a0", "#f68f74", "#f2705a", "#e84536", "#c3262c"];
const T = (x, y, s, z, a = "middle", extra = "") => `<text x="${x}" y="${y}" font-size="${z}" text-anchor="${a}" fill="#4b4b4b" stroke="none" ${extra}>${s}</text>`;
function panel(id, [x0, y0, x1, y1], ax, bx, ay, by, mode, legend) {
  const X = u => ax + (u - 4.5) / 2 * (bx - ax), Y = v => by + (7 - v) / 2.5 * (ay - by);
  let h = `<rect x="${x0}" y="${y0}" width="${x1 - x0}" height="${y1 - y0}" fill="#e8dde6"/>`;
  for (let u = 4.25; u <= 6.5; u += .25) if (X(u) > x0) h += `<path d="M${X(u)} ${y0}V${y1}" stroke="#fafafa" stroke-width="${u * 2 % 1 ? .9 : 1.8}"/>`;
  for (let v = 4.5; v <= 7.25; v += .25) h += `<path d="M${x0} ${Y(v)}H${x1}" stroke="#fafafa" stroke-width="${v * 2 % 1 ? .9 : 1.8}"/>`;
  for (let u = 4.5; u <= 6.5; u += .5) h += `<path d="M${X(u)} ${y1}v2" stroke="#666"/>` + T(X(u), y1 + 8, u.toFixed(1), 6);
  for (let v = 4.5; v <= 7; v += .5) h += `<path d="M${x0} ${Y(v)}h-2" stroke="#666"/>` + T(x0 - 3, Y(v) + 2, v.toFixed(1), 6, "end");
  h += T((x0 + x1) / 2, y1 + 16, "SOD", 7.5) + `<g transform="translate(${x0 - 14} ${(y0 + y1) / 2}) rotate(-90)">${T(0, 0, "tau", 7.5)}</g>`;
  for (const p of (mode == "c" || mode == "d") ? pts.slice().sort((a, b) => (a.k == 2) - (b.k == 2) || a.o - b.o) : pts.slice().sort((a, b) => a.o - b.o)) {
    const x = X(p.u), y = Y(p.v), st = `stroke="#333" stroke-opacity=".6" stroke-width=".5"`;
    if (mode == "c") {
      if (p.k == 0) h += `<circle cx="${x}" cy="${y}" r="2.200" fill="${cols[0]}" ${st}/>`;
      else if (p.k == 1) h += `<rect x="${x - 1.8}" y="${y - 1.8}" width="3.600" height="3.600" fill="${cols[1]}" ${st}/>`;
      else h += `<path d="M${x} ${y - 2.6}l2.600 2.600-2.600 2.600-2.600-2.600z" fill="${cols[2]}" ${st}/>`;
    } else {
      const f = mode == "a" ? "#f02e22" : mode == "d" ? cols[p.k] : reds[Math.max(0, Math.min(5, Math.floor((p.r - 2) * 1.2 + p.o)))];
      h += `<circle cx="${x}" cy="${y}" r="${p.r}" fill="${f}" fill-opacity=".8" ${st}/>`;
    }
  }
  const el = document.getElementById(id);
  el.setAttribute("font-family", "Liberation Sans");
  el.innerHTML = h + legend;
}
const L = (x, y, s) => T(x, y, s, 6, "start"), H = (x, y, s) => T(x, y, s, 7.5, "start");
const ring = (x, y, r, f = "none") => `<circle cx="${x}" cy="${y}" r="${r}" fill="${f}" stroke="#777" stroke-width=".6"/>`;
panel("pa", [932, 120, 1083, 272], 949, 1078.7, 267.3, 135, "a", H(1093, 180, "age") + [[189.5, 2.5, "0.984"], [200.5, 4, "0.986"], [212.3, 5, "0.988"]].map(([y, r, s]) => ring(1099.5, y, r, "#ef5548") + L(1109, y + 2, s)).join(""));
panel("pb", [1202, 120, 1354, 271], 1220.3, 1350.3, 266.6, 135.3, "b", H(1366, 138, "age") + `<defs><linearGradient id="redscale" x2="0" y2="1"><stop stop-color="#b01018"/><stop offset=".3" stop-color="#ed3427"/><stop offset=".65" stop-color="#f68b70"/><stop offset="1" stop-color="#f3ddd8"/></linearGradient></defs><rect x="1366" y="141" width="12" height="57" fill="url(#redscale)"/>` + L(1381, 158.500, "0.988") + L(1381, 176.500, "0.986") + L(1381, 195, "0.984") + H(1366, 219, "age") + [[228.3, 2.7, "0.984"], [240, 4.2, "0.986"], [252.2, 5.2, "0.988"]].map(([y, r, s]) => ring(1372.6, y, r) + L(1381, y + 2, s)).join(""));
panel("pc", [927, 408, 1078, 556], 945.3, 1073.7, 551.3, 423, "c", H(1088.5, 467, "Class") + ring(1093.7, 476.6, 2.2, cols[0]) + `<rect x="1092" y="485.500" width="3.600" height="3.600" fill="${cols[1]}"/><path d="M1093.700 495l2.700 2.700-2.700 2.700-2.700-2.700z" fill="${cols[2]}" stroke="#555" stroke-width=".4"/>` + L(1102, 479, "Control") + L(1102, 489.500, "Impaired") + L(1102, 500, "Uncertain"));
panel("pd", [1199, 408, 1350, 557], 1217, 1345.5, 552.3, 423.3, "d", H(1360.5, 439, "Class") + ring(1365.7, 448.4, 1.3, cols[0]) + ring(1365.7, 459, 1.3, cols[1]) + ring(1365.7, 469.6, 1.3, cols[2]) + L(1374.5, 450.500, "Control") + L(1374.5, 461.300, "Impaired") + L(1374.5, 472, "Uncertain") + H(1360.5, 495, "age") + [[504.3, 2.6, "0.984"], [515, 4.1, "0.986"], [526.6, 5.1, "0.988"]].map(([y, r, s]) => ring(1366.4, y, r) + L(1376, y + 2, s)).join(""));
</script>
</body>
</html>
